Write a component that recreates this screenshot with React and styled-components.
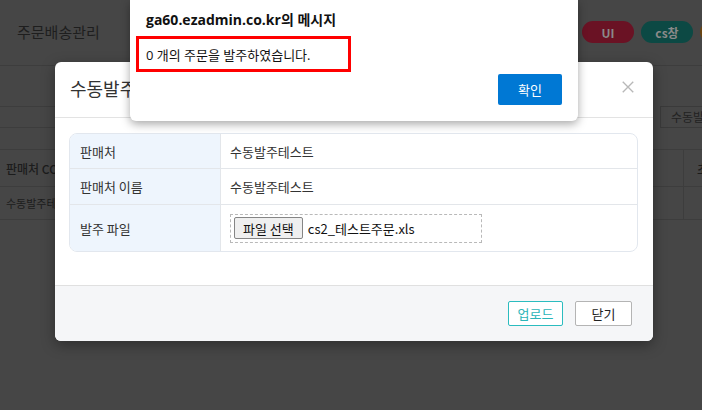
import React from "react";
import styled, { createGlobalStyle } from "styled-components";

const GlobalStyle = createGlobalStyle`
  html, body {
    margin: 0;
    padding: 0;
    width: 702px;
    height: 410px;
    overflow: hidden;
    background: #464646;
    font-family: "Noto Sans", "Noto Sans CJK KR", sans-serif;
  }
  * { box-sizing: border-box; }
`;

const App = () => {
  return (
    <>
      <GlobalStyle />
      <Page>
        <TopBar>
          <PageTitle>주문배송관리</PageTitle>
          <Pills>
            <Pill bg="#6a1224">UI</Pill>
            <Pill bg="#0c4944">cs창</Pill>
            <Pill bg="#6b4512" />
          </Pills>
        </TopBar>
        <Toolbar>
          <ToolInput />
          <ToolButton>수동발주</ToolButton>
        </Toolbar>
        <BgTable>
          <BgRow head>
            <BgCell>판매처 CODE</BgCell>
            <BgCell grow />
            <BgCell narrow>초기화</BgCell>
          </BgRow>
          <BgRow>
            <BgCell>수동발주테스트</BgCell>
            <BgCell grow />
            <BgCell narrow />
          </BgRow>
        </BgTable>
      </Page>

      <Modal>
        <ModalHeader>
          <ModalTitle>수동발주 업로드</ModalTitle>
          <CloseIcon viewBox="0 0 16 16">
            <path d="M2 2 L14 14 M14 2 L2 14" />
          </CloseIcon>
        </ModalHeader>
        <ModalBody>
          <InfoTable>
            <InfoRow h={35}>
              <Label>판매처</Label>
              <Value>수동발주테스트</Value>
            </InfoRow>
            <InfoRow h={36}>
              <Label>판매처 이름</Label>
              <Value>수동발주테스트</Value>
            </InfoRow>
            <InfoRow h={46} last>
              <Label>발주 파일</Label>
              <Value>
                <FileBox>
                  <FileButton>파일 선택</FileButton>
                  <FileName>cs2_테스트주문.xls</FileName>
                </FileBox>
              </Value>
            </InfoRow>
          </InfoTable>
        </ModalBody>
        <ModalFooter>
          <FooterButton variant="upload">업로드</FooterButton>
          <FooterButton>닫기</FooterButton>
        </ModalFooter>
      </Modal>

      <Alert>
        <AlertTitle>ga60.ezadmin.co.kr의 메시지</AlertTitle>
        <AlertMessage>0 개의 주문을 발주하였습니다.</AlertMessage>
        <AlertActions>
          <ConfirmButton>확인</ConfirmButton>
        </AlertActions>
      </Alert>
    </>
  );
};

export default App;

/* dimmed page behind the dialogs */
const Page = styled.div`
  width: 702px;
  height: 410px;
  overflow: hidden;
  background: #464646;
  color: #1c1c1c;
  font-family: "Noto Sans CJK KR", sans-serif;
`;

const TopBar = styled.div`
  height: 66px;
  display: flex;
  align-items: center;
  justify-content: space-between;
  padding-left: 17px;
  border-bottom: 1px solid #3d3d3d;
`;

const PageTitle = styled.div`
  font-size: 15px;
  color: #1e1e1e;
  margin-top: -2px;
`;

const Pills = styled.div`
  display: flex;
  gap: 7px;
  margin-right: -50px;
  margin-top: -1px;
`;

const Pill = styled.div`
  width: 52px;
  height: 22px;
  border-radius: 11px;
  background: ${(p) => p.bg};
  color: #8a8a8a;
  font-size: 12px;
  font-weight: 700;
  display: flex;
  align-items: center;
  justify-content: center;
`;

const Toolbar = styled.div`
  height: 84px;
  display: flex;
  align-items: flex-start;
  justify-content: space-between;
  padding-top: 40px;
  border-bottom: 1px solid #3d3d3d;
`;

const ToolInput = styled.div`
  width: 60px;
  height: 22px;
  border-top: 1px solid #3d3d3d;
  border-bottom: 1px solid #3d3d3d;
`;

const ToolButton = styled.div`
  width: 42px;
  height: 22px;
  border: 1px solid #3a3a3a;
  border-right: none;
  font-size: 12px;
  color: #222;
  padding-left: 10px;
  line-height: 20px;
  white-space: nowrap;
  overflow: hidden;
`;

const BgTable = styled.div`
  display: flex;
  flex-direction: column;
`;

const BgRow = styled.div`
  height: ${(p) => (p.head ? 37 : 33)}px;
  display: flex;
  border-bottom: 1px solid #3d3d3d;
  font-size: ${(p) => (p.head ? 12 : 11)}px;
  font-weight: ${(p) => (p.head ? 500 : 400)};
`;

const BgCell = styled.div`
  display: flex;
  align-items: center;
  padding-left: ${(p) => (p.narrow ? 13 : 6)}px;
  flex: ${(p) => (p.grow ? 1 : "none")};
  width: ${(p) => (p.narrow ? "19px" : p.grow ? "auto" : "60px")};
  white-space: nowrap;
  overflow: hidden;
  border-left: ${(p) => (p.narrow ? "1px solid #3d3d3d" : "none")};
`;

/* manual order upload modal */
const Modal = styled.div`
  position: absolute;
  left: 55px;
  top: 62px;
  width: 598px;
  height: 279px;
  background: #fff;
  border-radius: 6px;
  box-shadow: 0 4px 14px rgba(0, 0, 0, 0.35);
  display: flex;
  flex-direction: column;
  overflow: hidden;
  font-family: "Noto Sans CJK KR", sans-serif;
`;

const ModalHeader = styled.div`
  height: 56px;
  flex: none;
  display: flex;
  align-items: center;
  justify-content: space-between;
  padding: 0 18px 0 15px;
  border-bottom: 1px solid #e3e3e3;
`;

const ModalTitle = styled.div`
  font-size: 18px;
  color: #333;
  margin-top: -4px;
`;

const CloseIcon = styled.svg`
  width: 14px;
  height: 14px;
  stroke: #b8b8b8;
  stroke-width: 1.6;
  fill: none;
  margin-top: -6px;
`;

const ModalBody = styled.div`
  flex: 1;
  padding: 15px 15px 0 14px;
`;

const InfoTable = styled.div`
  border: 1px solid #e2e7ee;
  border-radius: 8px;
  overflow: hidden;
`;

const InfoRow = styled.div`
  height: ${(p) => p.h}px;
  display: grid;
  grid-template-columns: 151px 1fr;
  border-bottom: ${(p) => (p.last ? "none" : "1px solid #e3e6ea")};
  font-size: 13px;
  color: #333;
`;

const Label = styled.div`
  background: #eef5fd;
  border-right: 1px solid #e3e6ea;
  display: flex;
  align-items: center;
  padding-left: 10px;
`;

const Value = styled.div`
  display: flex;
  align-items: center;
  padding-left: 9px;
`;

const FileBox = styled.div`
  width: 252px;
  height: 29px;
  border: 1px dashed #b9b9b9;
  display: flex;
  align-items: center;
  padding-left: 3px;
  gap: 5px;
`;

const FileButton = styled.div`
  height: 22px;
  padding: 0 8px;
  background: #efefef;
  border: 1px solid #858585;
  border-radius: 2px;
  font-size: 13px;
  color: #111;
  display: flex;
  align-items: center;
`;

const FileName = styled.span`
  font-size: 13px;
  color: #111;
`;

const ModalFooter = styled.div`
  height: 56px;
  flex: none;
  background: #f5f6f8;
  border-top: 1px solid #e0e0e0;
  display: flex;
  align-items: flex-start;
  justify-content: flex-end;
  gap: 12px;
  padding: 15px 21px 0 0;
`;

const FooterButton = styled.button`
  height: 25px;
  width: ${(p) => (p.variant === "upload" ? 55 : 57)}px;
  background: #fff;
  border: 1px solid ${(p) => (p.variant === "upload" ? "#2bbcbf" : "#b4b4b4")};
  border-radius: 2px;
  color: ${(p) => (p.variant === "upload" ? "#2bb5b8" : "#222")};
  font-family: "Noto Sans CJK KR", sans-serif;
  font-size: 13px;
  padding: 0;
`;

/* browser alert box */
const Alert = styled.div`
  position: absolute;
  left: 130px;
  top: 0;
  width: 448px;
  height: 121px;
  background: #fff;
  border-radius: 0 0 6px 6px;
  box-shadow: 0 3px 10px rgba(0, 0, 0, 0.35);
  padding: 11px 16px 0 6px;
  display: flex;
  flex-direction: column;
  font-family: "Open Sans", "Noto Sans CJK KR", sans-serif;
`;

const AlertTitle = styled.div`
  font-size: 14px;
  font-weight: 700;
  color: #111;
  padding-left: 10px;
  line-height: 18px;
`;

const AlertMessage = styled.div`
  margin-top: 7px;
  width: 215px;
  height: 36px;
  border: 3px solid #f00;
  padding-left: 7px;
  display: flex;
  align-items: center;
  font-size: 13px;
  color: #111;
`;

const AlertActions = styled.div`
  display: flex;
  justify-content: flex-end;
  margin-top: 2px;
`;

const ConfirmButton = styled.button`
  width: 64px;
  height: 31px;
  background: #0078d4;
  color: #fff;
  border: none;
  border-radius: 2px;
  font-family: "Noto Sans CJK KR", sans-serif;
  font-size: 13px;
`;
